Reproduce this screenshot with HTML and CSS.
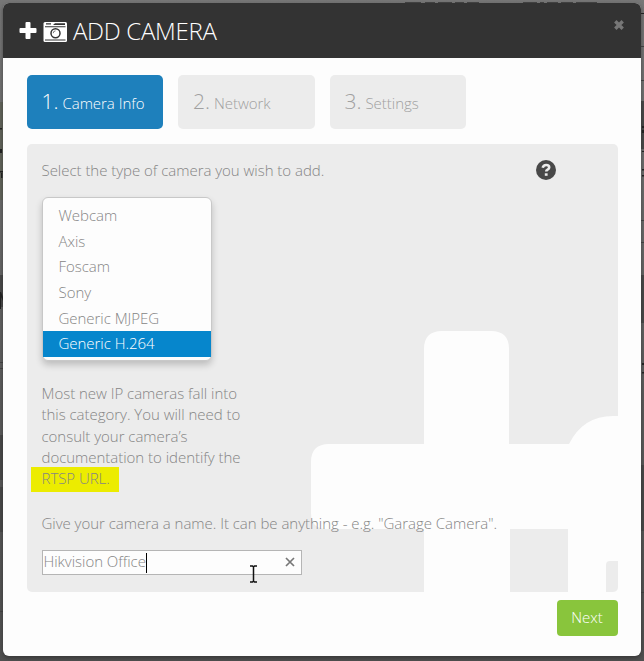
FILE: index.html
```html
<!DOCTYPE html>
<html lang="en">
<head>
<meta charset="utf-8">
<title>Add Camera</title>
<link rel="stylesheet" href="styles.css">
</head>
<body>
<svg class="backdrop" width="644" height="661" viewBox="0 0 644 661">
  <path class="olive" d="M0 102h3v98H0z"/>
  <path class="shade" d="M0 275h3v32H0zM0 435h3v45H0zM0 487h3v45H0zM641 101h3v48h-3zM641 275h3v48h-3zM641 465h3v66h-3z"/>
  <path class="ink" d="M0 292h1v17H0zM1 292l2 5v4l-2-4zM0 128h2v1.500H0zM0 149h2v4H0zM0 171h3v1.500H0zM1 173h1.500v5H1zM642 126h2v2h-2zM642 130h2v3h-2zM642 151h2v1h-2zM642 169h2v1.500h-2zM642 175h2v1.500h-2zM642 363h2v2h-2zM642 372h2v1.500h-2zM641 13h3v1h-3z"/>
  <path class="lines" d="M405 2.500h16m4 0h10m3 0h14m3 0h9m3 0h12M523 2.500h14m3 0h4m3 0h11m3 0h12m3 0h21M641 46.500h3M641 80.500h3M641 220.500h3M641 242.500h3M0 362.500h3M0 368.500h3M0 611.500h3M641 592.500h3"/>
</svg>
<main class="modal">
  <header class="head">
    <svg class="head-icons" width="48" height="22" viewBox="0 0 48 22">
      <path class="w" d="M7.500 1h3q1 0 1 1v5h5q1 0 1 1v3q0 1-1 1h-5v5q0 1-1 1h-3q-1 0-1-1v-5h-5q-1 0-1-1V8q0-1 1-1h5V2q0-1 1-1z"/>
      <rect class="w" x="24.500" y="1" width="23.500" height="20" rx="1.500"/>
      <path class="d" d="M27 2.200h5v1.300h-5zM34 4l2-1.800h10V4zM26 5.200h20.500v1H26zM26 18.400h20.500v1H26z"/>
      <circle class="ring" cx="36.500" cy="12.200" r="4.500"/>
      <path class="glint" d="M34.200 12.200q0-2.300 2.300-2.300"/>
    </svg>
    <h1>ADD CAMERA</h1>
    <svg class="close" width="12" height="12" viewBox="0 0 12 12"><path d="M2.300 2.300l7.400 7.400M9.700 2.300l-7.400 7.400"/></svg>
  </header>
  <nav class="tabs">
    <div class="tab active"><span class="num">1.</span><span>Camera Info</span></div>
    <div class="tab"><span class="num">2.</span><span>Network</span></div>
    <div class="tab"><span class="num">3.</span><span>Settings</span></div>
  </nav>
  <section class="panel">
    <svg class="art" width="591" height="448" viewBox="0 0 591 448">
      <path d="M397 448V385H300q-16 0-16-16V318q0-18 18-18h95V205q0-18 18-18h49q18 0 18 18v95h60q14-28 44-28h6V448h-51V385h-58v63z"/>
      <path class="corner" d="M579 421q0-4 4-4h8v31h-12z"/>
    </svg>
    <div class="intro">
      <p>Select the type of camera you wish to add.</p>
      <svg class="help" width="20" height="20" viewBox="0 0 20 20"><circle cx="10" cy="10" r="10"/><path d="M6.700 7.800Q7.300 5 10.200 5q3 0 3 2.400 0 1.300-1.600 2.200-1.400.8-1.400 2"/><rect x="8.800" y="13.300" width="2.800" height="2.500"/></svg>
    </div>
    <ul class="menu">
      <li>Webcam</li>
      <li>Axis</li>
      <li>Foscam</li>
      <li>Sony</li>
      <li>Generic MJPEG</li>
      <li class="selected">Generic H.264</li>
    </ul>
    <p class="note">Most new IP cameras fall into<br>this category. You will need to<br>consult your camera’s<br>documentation to identify the<br><mark>RTSP URL.</mark></p>
    <p class="name-label">Give your camera a name. It can be anything - e.g. "Garage Camera".</p>
    <div class="field"><span>Hikvision Office</span><i class="caret"></i>
      <svg class="clear" width="10" height="10" viewBox="0 0 10 10"><path d="M1 1l8 8M9 1L1 9"/></svg>
    </div>
  </section>
  <footer><button type="button">Next</button></footer>
</main>
<svg class="pointer" width="9" height="18" viewBox="0 0 9 18"><path d="M1 1h2.500l1 1 1-1H8M4.500 2v14M1 17h2.500l1-1 1 1H8"/></svg>
</body>
</html>
```
FILE: styles.css
```css
* { box-sizing: border-box; }
body {
  margin: 0;
  width: 644px;
  height: 661px;
  padding: 3px;
  overflow: hidden;
  background: linear-gradient(#777 0, #6b6b6b 30%, #5c5c5c 60%, #505050 100%);
  font: 300 15px/21.3px "Open Sans", sans-serif;
  letter-spacing: -0.03px;
  color: #858585;
}
h1, p, ul { margin: 0; padding: 0; font-weight: 300; }
svg { display: block; flex: none; }
.backdrop { position: absolute; left: 0; top: 0; }
.olive { fill: #62645a; }
.shade { fill: #484848; }
.ink { fill: #222; }
.lines { fill: none; stroke: #444; }
.modal {
  position: relative;
  width: 638px;
  height: 653px;
  border-radius: 6px;
  background: #fdfdfd;
  overflow: hidden;
  box-shadow: 0 2px 4px #2228;
}
.head {
  display: flex;
  align-items: flex-start;
  height: 55px;
  padding: 0 16px;
  background: #333;
}
.head-icons { margin-top: 18px; }
.w { fill: #fff; }
.d { fill: #333; }
.ring { fill: none; stroke: #333; stroke-width: 1.5; }
.glint { fill: none; stroke: #777; }
h1 { margin: 11px 0 0 6px; font-size: 24px; line-height: 34px; letter-spacing: -0.3px; color: #fff; white-space: nowrap; }
.close { margin: 16px 0 0 auto; }
.close path { stroke: #777; stroke-width: 3.4; }
.tabs { display: flex; gap: 15px; padding: 17px 23.500px 0; }
.tab {
  display: flex;
  align-items: baseline;
  gap: 4px;
  width: 136.500px;
  height: 54px;
  padding: 12px 15px;
  border-radius: 5px;
  background: #ececec;
  color: #a0a0a0;
  white-space: nowrap;
  line-height: 29px;
}
.tab.active { background: #1e80bc; color: #fff; }
.num { font-size: 21px; }
.panel {
  position: relative;
  width: 591px;
  height: 448px;
  margin: 15px 0 0 23.500px;
  padding: 16px 15px 0;
  border-radius: 5px;
  background: #ececec;
  overflow: hidden;
  white-space: nowrap;
}
.panel > * { position: relative; }
.panel > .art { position: absolute; left: 0; top: 0; fill: #fdfdfd; }
.art .corner { fill: #ececec; }
.intro { display: flex; justify-content: space-between; padding-right: 47px; }
.help path { fill: none; stroke: #ececec; stroke-width: 2.6; }
.help circle { fill: #484848; }
.help rect { fill: #ececec; }
.menu {
  width: 170.500px;
  height: 164px;
  margin-top: 16px;
  padding: 5px 0;
  list-style: none;
  border: 1px solid #c8c8c8;
  border-radius: 6px;
  background: #fdfdfd;
  box-shadow: 0 4px 7px #0003;
}
.menu li { height: 25.600px; padding-left: 16px; line-height: 25.300px; }
.menu .selected { background: #0686cc; color: #fff; }
.note { margin-top: 21.700px; }
mark { position: relative; z-index: 0; background: none; color: inherit; }
mark::before {
  content: "";
  position: absolute;
  z-index: -1;
  inset: -1px -9px -4px -10.500px;
  background: #ecec00;
}
.name-label { margin-top: 23.500px; }
.field {
  display: flex;
  align-items: center;
  width: 260.500px;
  height: 25px;
  margin-top: 16px;
  padding: 0 6px 2px 1px;
  border: 1px solid #b5b5b5;
  background: #fdfdfd;
}
.caret { width: 1.500px; height: 20px; margin-top: 2px; background: #000; }
.clear { margin-left: auto; }
.clear path { stroke: #777; stroke-width: 1.7; }
footer { display: flex; justify-content: flex-end; padding: 8px 23.500px 0; }
button {
  width: 61px;
  height: 36px;
  padding: 0 0 2px;
  border: 0;
  border-radius: 4px;
  background: #89c53c;
  color: #fff;
  font: 300 15px "Open Sans", sans-serif;
}
.pointer { position: absolute; left: 249px; top: 565px; fill: none; stroke: #111; stroke-width: 1.5; }
```
